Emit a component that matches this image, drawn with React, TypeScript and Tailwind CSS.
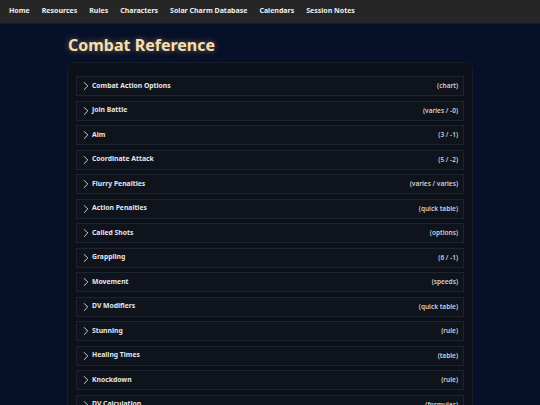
import { ChevronRight } from "lucide-react"

const nav = ["Home", "Resources", "Rules", "Characters", "Solar Charm Database", "Calendars", "Session Notes"]

const sections: [string, string][] = [
  ["Combat Action Options", "(chart)"],
  ["Join Battle", "(varies / -0)"],
  ["Aim", "(3 / -1)"],
  ["Coordinate Attack", "(5 / -2)"],
  ["Flurry Penalties", "(varies / varies)"],
  ["Action Penalties", "(quick table)"],
  ["Called Shots", "(options)"],
  ["Grappling", "(6 / -1)"],
  ["Movement", "(speeds)"],
  ["DV Modifiers", "(quick table)"],
  ["Stunning", "(rule)"],
  ["Healing Times", "(table)"],
  ["Knockdown", "(rule)"],
  ["DV Calculation", "(formulas)"],
  ["Onslaught", "(rule)"],
]

function Row({ title, note }: { title: string; note: string }) {
  return (
    <div className="h-[20px] shrink-0 flex items-center justify-between border border-[#1e2330] bg-[#0f131c] pl-[2px] pr-[5px]">
      <div className="flex items-center">
        <ChevronRight className="w-[14px] h-[14px] text-[#d8dbe2]" strokeWidth={1.6} />
        <span className="-ml-[1px] text-[6.8px] font-bold text-[#e4e7ee]">{title}</span>
      </div>
      <span className="text-[6.5px] font-semibold text-[#cfd0d3]">{note}</span>
    </div>
  )
}

export default function App() {
  return (
    <div className="w-[540px] h-[405px] overflow-hidden bg-[#061029] font-['Noto_Sans',sans-serif]">
      <div className="h-[24px] bg-[#262626] flex items-center gap-[12px] pl-[9px] border-b border-[#1b1b1b]">
        {nav.map(n => (
          <span key={n} className="text-[7px] font-bold text-[#eeeeee]">{n}</span>
        ))}
      </div>
      <div className="pl-[67px] w-[473px]">
        <h1 className="text-[16px] font-bold text-[#f4dfb6] leading-none pt-[13px] pb-[9px] pl-[1px] [text-shadow:0_0_6px_rgba(255,190,90,0.55)]">
          Combat Reference
        </h1>
        <div className="rounded-[6px] border border-[#161b26] bg-[#0c1019] pt-[13px] px-[8px] flex flex-col gap-[4.5px]">
          {sections.map(([t, n]) => (
            <Row key={t} title={t} note={n} />
          ))}
        </div>
      </div>
    </div>
  )
}
